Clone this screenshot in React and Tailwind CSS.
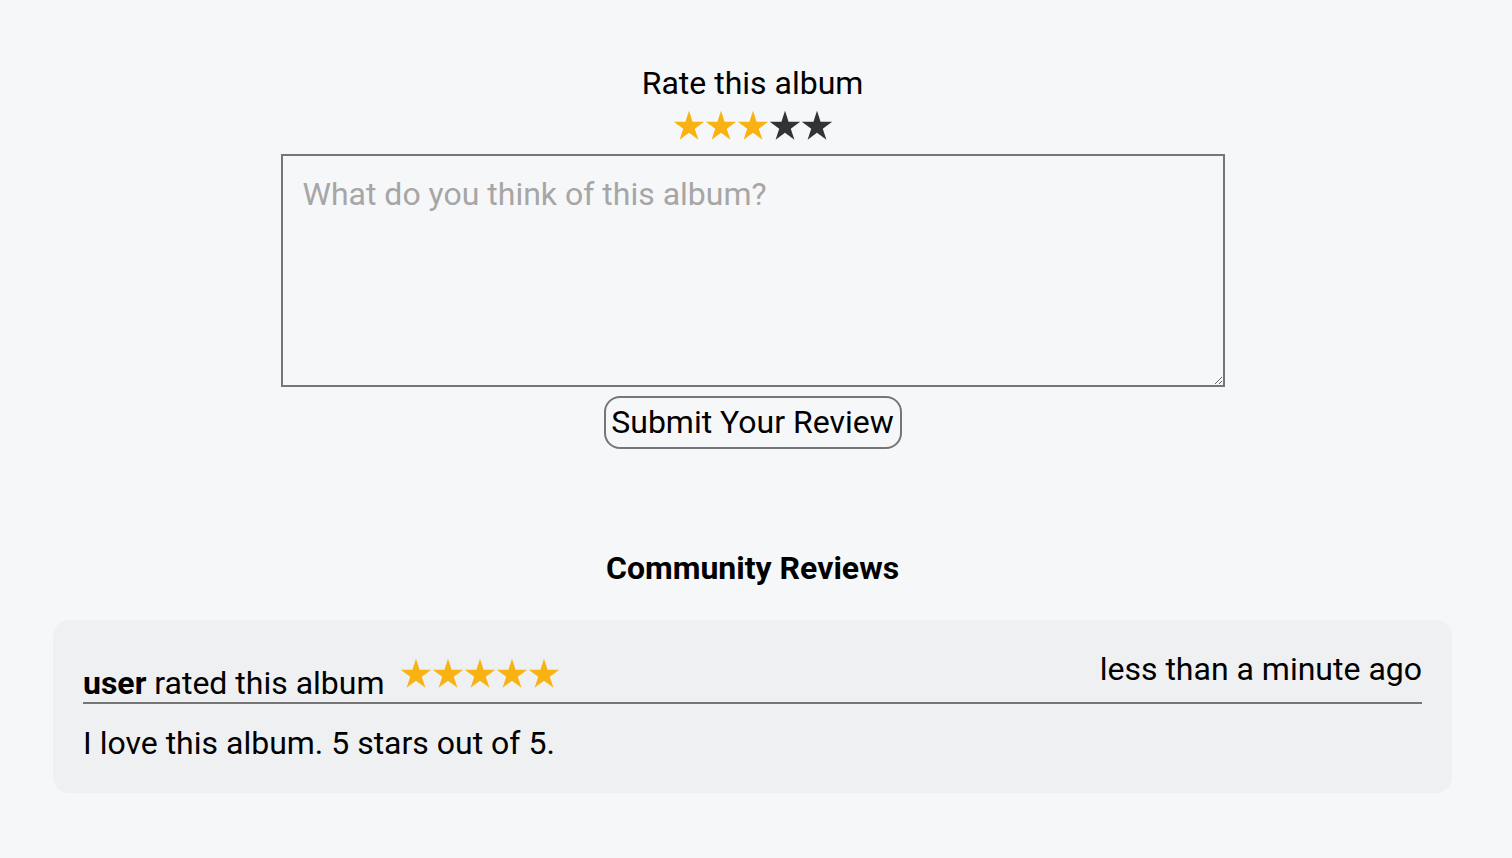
import React from "react";

const STAR =
  "50,2 61.17,36.63 97.55,36.55 68.07,57.87 79.39,92.45 50,71 20.61,92.45 31.93,57.87 2.45,36.55 38.83,36.63";

const Star = ({ filled }) => (
  <svg
    viewBox="0 0 100 96"
    className={`w-[32px] h-[31px] ${filled ? "fill-[#f8b211]" : "fill-[#333333]"}`}
  >
    <polygon points={STAR} />
  </svg>
);

const Stars = ({ value }) => (
  <div className="flex">
    {[1, 2, 3, 4, 5].map((n) => (
      <Star key={n} filled={n <= value} />
    ))}
  </div>
);

const App = () => {
  return (
    <div className="min-h-[858px] bg-[#f6f7f9] font-['Roboto',sans-serif] text-black">
      <div className="w-[1505px] flex flex-col items-center pt-[65px]">

        {/* RATE */}

        <h2 className="text-[32px] leading-[37px]">Rate this album</h2>

        <div className="mt-[8px]">
          <Stars value={3} />
        </div>

        <textarea
          placeholder="What do you think of this album?"
          className="mt-[13px] w-[944px] h-[233px] border-2 border-[#767676] bg-transparent px-[20px] pt-[20px] pb-[10px] text-[32px] leading-[37px] outline-none placeholder:text-[#a6a6a6]"
        />

        <button className="mt-[9px] w-[298px] h-[53px] rounded-[16px] border-2 border-[#767676] text-[32px] leading-[37px]">
          Submit Your Review
        </button>

        {/* REVIEWS */}

        <h3 className="mt-[101px] text-[32px] leading-[37px] font-bold">
          Community Reviews
        </h3>

        <div className="mt-[33px] w-[1399px] rounded-[16px] bg-[#eff0f2] px-[30px] pt-[31px] pb-[31px]">

          <div className="flex items-end justify-between border-b-2 border-[#767676]">

            <div className="flex items-end">
              <span className="text-[32px] leading-[37px]">
                <b>user</b> rated this album
              </span>
              <div className="ml-[15px] mb-[13px]">
                <Stars value={5} />
              </div>
            </div>

            <span className="mb-[14px] text-[32px] leading-[37px]">
              less than a minute ago
            </span>

          </div>

          <p className="mt-[21px] text-[32px] leading-[37px]">
            I love this album. 5 stars out of 5.
          </p>

        </div>

      </div>
    </div>
  );
};

export default App;
